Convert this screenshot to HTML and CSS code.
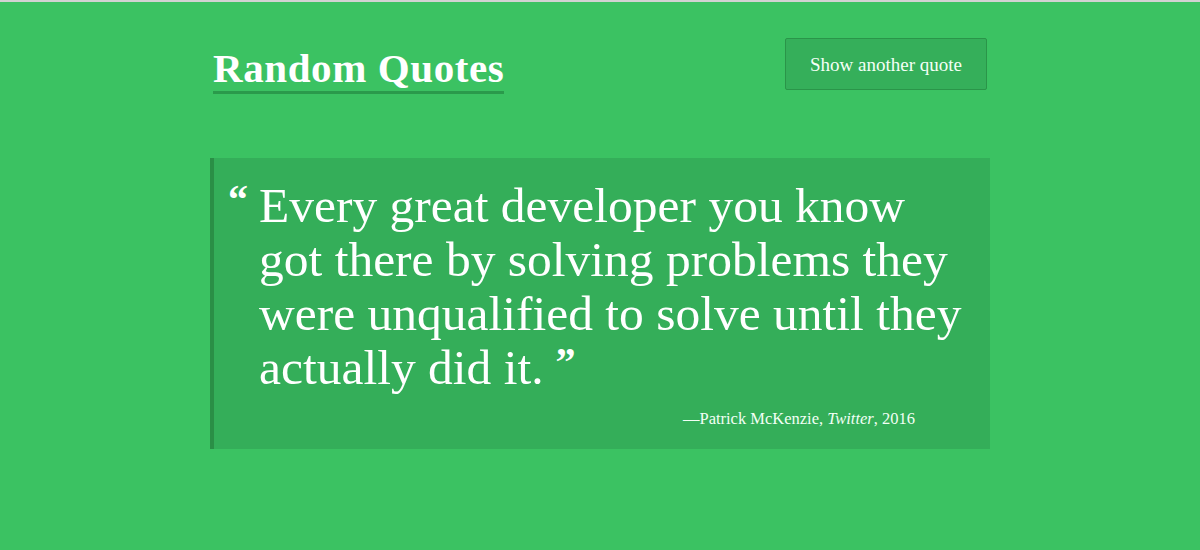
FILE: index.html
```html
<!DOCTYPE html>
<html lang="en">
<head>
<meta charset="utf-8">
<title>Random Quotes</title>
<link rel="stylesheet" href="styles.css">
</head>
<body>
<div class="page">
  <header class="header">
    <h1 class="title">Random Quotes</h1>
    <button class="btn" type="button">Show another quote</button>
  </header>
  <blockquote class="quote">
    <p class="quote-text">Every great developer you know got there by solving problems they were unqualified to solve until they actually did it.</p>
    <p class="source">—Patrick McKenzie, <em>Twitter</em>, 2016</p>
  </blockquote>
</div>
</body>
</html>
```
FILE: styles.css
```css
html, body {
  margin: 0;
  padding: 0;
}
body {
  background: #3bc262;
  border-top: 2px solid #d2d2d2;
  font-family: "Liberation Serif", "Times New Roman", serif;
  color: #ffffff;
  height: 548px;
  overflow: hidden;
}
.page {
  width: 780px;
  margin: 0 auto;
}
.header {
  display: flex;
  justify-content: space-between;
  align-items: flex-start;
  padding: 36px 3px 0 3px;
  height: 120px;
  box-sizing: border-box;
}
.title {
  margin: 10px 0 0 0;
  font-size: 41px;
  font-weight: bold;
  line-height: 40px;
  padding-bottom: 3px;
  border-bottom: 3px solid #2a9a4b;
  letter-spacing: 0.6px;
}
.btn {
  width: 202px;
  height: 52px;
  padding: 2px 0 0 0;
  background: #35af5a;
  border: 1px solid #2a9549;
  border-radius: 2px;
  color: #f4fff6;
  font-family: "Liberation Serif", "Times New Roman", serif;
  font-size: 19px;
  cursor: pointer;
}
.quote {
  margin: 36px 0 0 0;
  background: #34ae59;
  border-left: 4px solid #2a8f46;
  padding: 21px 20px 25px 45px;
  height: 291px;
  box-sizing: border-box;
}
.quote-text {
  margin: 0;
  font-size: 49.5px;
  line-height: 54px;
}
.quote-text::before,
.quote-text::after {
  display: inline-block;
  font-weight: bold;
  font-size: 40px;
  line-height: 30px;
  vertical-align: top;
  margin-top: 6px;
}
.quote-text::before {
  content: "“";
  width: 31px;
  margin-left: -31px;
}
.quote-text::after {
  content: "”";
  margin-left: 12px;
}
.source {
  margin: 14px 55px 0 0;
  text-align: right;
  font-size: 16.5px;
  color: #f2fff5;
}
.source em {
  font-style: italic;
}
```
